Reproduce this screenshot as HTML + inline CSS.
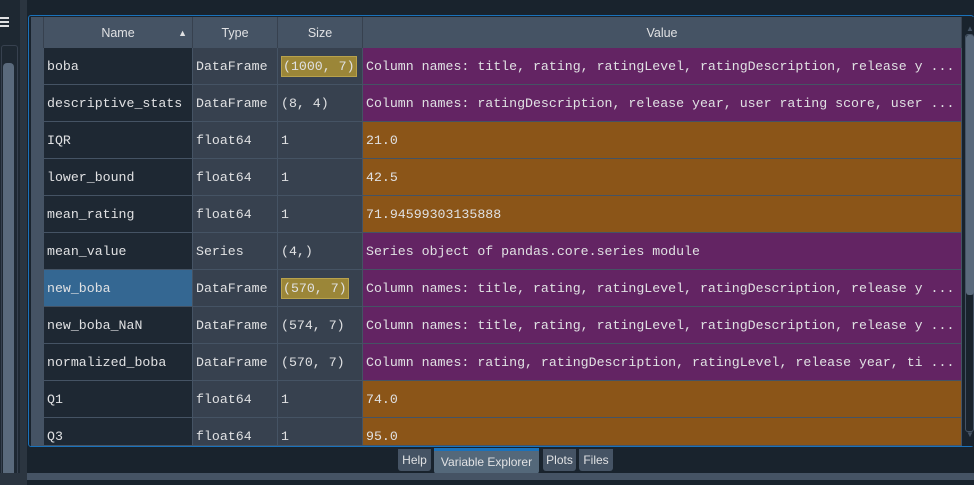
<!DOCTYPE html>
<html><head><style>
body{margin:0;width:974px;height:485px;background:#19232d;position:relative;overflow:hidden;font-family:"Liberation Sans",sans-serif}
.a{position:absolute}
.mono{font-family:"Liberation Mono","DejaVu Sans Mono",monospace;font-size:13.25px;color:#e0e1e3}
.cell{position:absolute;box-sizing:border-box;height:37px;line-height:38px;padding-left:3px;white-space:nowrap;overflow:hidden;border-right:1px solid #455364;border-bottom:1px solid #455364}
.hd{position:absolute;top:17px;height:31px;line-height:32px;background:#455364;color:#e0e1e3;font-size:12.5px;text-align:center;box-sizing:border-box;border-right:1px solid #37414f}
.tab{position:absolute;top:449px;height:22px;line-height:22px;background:#455364;color:#e0e1e3;font-size:12px;border-radius:0 0 3px 3px;text-align:center}
</style></head><body>
<div class="a" style="left:0;top:0;width:27px;height:485px;background:#1e2832"></div>
<div class="a" style="left:0;top:17px;width:9px;height:2px;background:#e0e1e3"></div>
<div class="a" style="left:0;top:21px;width:9px;height:2px;background:#e0e1e3"></div>
<div class="a" style="left:0;top:25px;width:9px;height:2px;background:#e0e1e3"></div>
<div class="a" style="left:1px;top:45px;width:17px;height:440px;border:1px solid #37414f;border-radius:3px;box-sizing:border-box"></div>
<div class="a" style="left:3px;top:63px;width:11px;height:422px;background:#5a6a7c;border-radius:4px"></div>
<div class="a" style="left:20px;top:0;width:7px;height:485px;background:#2b3540"></div>
<div class="a" style="left:27px;top:0;width:947px;height:15px;background:#19232d"></div>
<div class="a" style="left:28px;top:15px;width:946px;height:432px;border:1px solid #1a72bb;border-radius:3px;box-sizing:border-box"></div>
<div class="hd" style="left:31px;width:13px;background:#455364"></div>
<div class="hd" style="left:44px;width:149px">Name<span style="position:absolute;right:5px;top:0;font-size:9px">▲</span></div>
<div class="hd" style="left:193px;width:85px">Type</div>
<div class="hd" style="left:278px;width:85px">Size</div>
<div class="hd" style="left:363px;width:599px">Value</div>
<div id="rows"></div>
<div class="a" style="left:962px;top:17px;width:12px;height:429px;background:#19232d"></div>
<div class="a" style="left:966px;top:24px;font-size:8px;color:#455364">▲</div>
<div class="a" style="left:965px;top:34px;width:9px;height:398px;border:1px solid #455364;border-radius:3px;box-sizing:border-box"></div>
<div class="a" style="left:966px;top:35px;width:8px;height:260px;background:#5a6a7c;border-radius:3px"></div>
<div class="a" style="left:966px;top:430px;font-size:8px;color:#455364">▼</div>
<div class="tab" style="left:398px;width:33px">Help</div>
<div class="tab" style="left:434px;width:105px;background:#54687a;border-top:3px solid #1a72bb;top:448px;height:23px;line-height:22px">Variable Explorer</div>
<div class="tab" style="left:543px;width:33px">Plots</div>
<div class="tab" style="left:579px;width:34px">Files</div>
<div class="a" style="left:0;top:473px;width:974px;height:7px;background:#455364"></div>
<div class="a" style="left:0;top:473px;width:27px;height:12px;background:#2b3540"></div>
<div class="a" style="left:27px;top:480px;width:947px;height:5px;background:#19232d"></div>
<script>
const P='#632463',O='#8b5518';
const rows=[
['boba','DataFrame','(1000, 7)','Column names: title, rating, ratingLevel, ratingDescription, release y ...',P,1],
['descriptive_stats','DataFrame','(8, 4)','Column names: ratingDescription, release year, user rating score, user ...',P],
['IQR','float64','1','21.0',O],
['lower_bound','float64','1','42.5',O],
['mean_rating','float64','1','71.94599303135888',O],
['mean_value','Series','(4,)','Series object of pandas.core.series module',P],
['new_boba','DataFrame','(570, 7)','Column names: title, rating, ratingLevel, ratingDescription, release y ...',P,1,1],
['new_boba_NaN','DataFrame','(574, 7)','Column names: title, rating, ratingLevel, ratingDescription, release y ...',P],
['normalized_boba','DataFrame','(570, 7)','Column names: rating, ratingDescription, ratingLevel, release year, ti ...',P],
['Q1','float64','1','74.0',O],
['Q3','float64','1','95.0',O]];
let h='';
rows.forEach((r,i)=>{const y=48+i*37;
const H=i==10?28:37;
h+=`<div class="cell" style="left:31px;top:${y}px;width:13px;height:${H}px;background:#455364"></div>`;
h+=`<div class="cell mono" style="left:44px;top:${y}px;width:149px;height:${H}px;background:${r[6]?'#346792':'#1e2833'}">${r[0]}</div>`;
h+=`<div class="cell mono" style="left:193px;top:${y}px;width:85px;height:${H}px;background:#37414f">${r[1]}</div>`;
h+=`<div class="cell mono" style="left:278px;top:${y}px;width:85px;height:${H}px;background:#37414f">${r[5]?'<span style="background:#9b8638;padding:2px 1px;border:1px solid #b8a24c">'+r[2]+'</span>':r[2]}</div>`;
h+=`<div class="cell mono" style="left:363px;top:${y}px;width:599px;height:${H}px;background:${r[4]}">${r[3]}</div>`;});
document.getElementById('rows').innerHTML=h;
</script>
</body></html>
